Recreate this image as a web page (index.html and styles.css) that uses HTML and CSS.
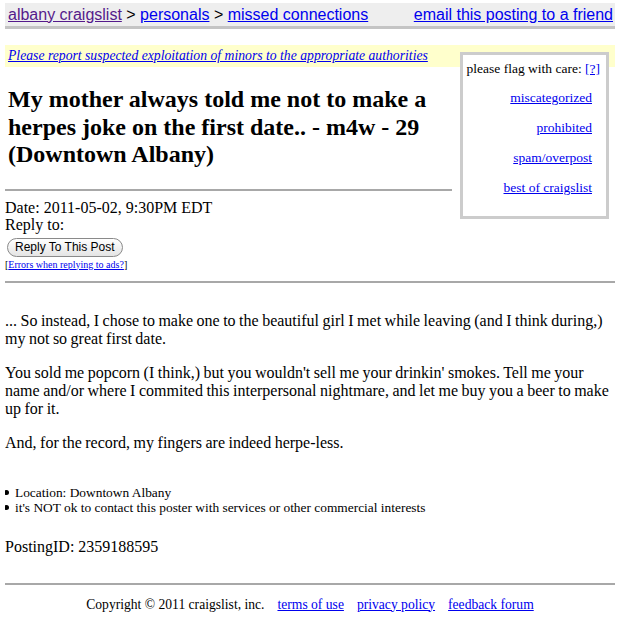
FILE: index.html
```html
<!DOCTYPE html>
<html>
<head>
<meta charset="utf-8">
<link rel="stylesheet" href="styles.css">
</head>
<body>
<div class="bchead">
  <div class="crumbs">
    <a class="visited" href="#">albany craigslist</a> <b>&gt;</b> <a href="#">personals</a> <b>&gt;</b> <a href="#">missed connections</a>
  </div>
  <a href="#">email this posting to a friend</a>
</div>

<div class="warning"><a href="#">Please report suspected exploitation of minors to the appropriate authorities</a></div>

<div class="top">
  <div class="main">
    <h2 class="title">My mother always told me not to make a herpes joke on the first date.. - m4w - 29 (Downtown Albany)</h2>
    <hr class="rule">
    <div class="meta">Date: 2011-05-02, 9:30PM EDT<br>Reply to:</div>
    <button class="reply">Reply To This Post</button>
    <div class="errors">[<a href="#">Errors when replying to ads?</a>]</div>
  </div>
  <div class="flags">
    <div class="flaghead">please flag with care: <a href="#">[?]</a></div>
    <a class="flag" href="#">miscategorized</a>
    <a class="flag" href="#">prohibited</a>
    <a class="flag" href="#">spam/overpost</a>
    <a class="flag" href="#">best of craigslist</a>
  </div>
</div>

<hr class="rule full">

<div class="userbody">
  <p>... So instead, I chose to make one to the beautiful girl I met while leaving (and I think during,) my not so great first date.</p>
  <p>You sold me popcorn (I think,) but you wouldn't sell me your drinkin' smokes. Tell me your name and/or where I commited this interpersonal nightmare, and let me buy you a beer to make up for it.</p>
  <p>And, for the record, my fingers are indeed herpe-less.</p>
</div>

<ul class="info">
  <li>Location: Downtown Albany</li>
  <li>it's NOT ok to contact this poster with services or other commercial interests</li>
</ul>

<div class="postingid">PostingID: 2359188595</div>

<hr class="rule full footrule">

<div class="footer">
  <span>Copyright &copy; 2011 craigslist, inc.</span>
  <a href="#">terms of use</a>
  <a href="#">privacy policy</a>
  <a href="#">feedback forum</a>
</div>
</body>
</html>
```
FILE: styles.css
```css
html, body { background: #fff; }
body {
  margin: 3px 5px 0 5px;
  font-family: "Liberation Serif", "Times New Roman", serif;
  font-size: 16px;
  color: #000;
}
a { color: #0000ee; }
a.visited { color: #551a8b; }

.bchead {
  display: flex;
  justify-content: space-between;
  align-items: center;
  background: #eeeeee;
  border-bottom: 3px solid #c4c4c4;
  height: 23px;
  padding: 0 2px 0 3px;
  font-family: "Liberation Sans", Arial, sans-serif;
  font-size: 16px;
}
.bchead b { font-weight: normal; color: #000; }

.warning {
  margin-top: 16px;
  background: #ffffcc;
  height: 22px;
  padding-left: 3px;
  font-size: 13.7px;
  font-style: italic;
  line-height: 22px;
}

.top {
  display: grid;
  grid-template-columns: 1fr 149px;
  column-gap: 8px;
  align-items: start;
  margin-right: 6px;
}
.main { padding-top: 19px; }
.title {
  margin: 0 0 0 3px;
  font-size: 24px;
  font-weight: bold;
  line-height: 27.5px;
}
.rule {
  border: 0;
  height: 2px;
  background: #a8a8a8;
  margin: 20px 0 0 0;
}
.meta {
  margin-top: 8px;
  line-height: 17px;
}
.reply {
  display: block;
  margin: 5px 0 0 2px;
  height: 19px;
  padding: 0 7px;
  border: 1px solid #8a8a8a;
  border-radius: 10px;
  background: linear-gradient(#ffffff, #e4e4e4);
  font-family: "Liberation Sans", Arial, sans-serif;
  font-size: 12px;
  line-height: 17px;
  color: #000;
}
.errors {
  margin: 2px 0 0 0;
  font-size: 10px;
  line-height: 12px;
}

.flags {
  margin-top: -15px;
  background: #fff;
  border: 3px solid #cccccc;
  box-sizing: border-box;
  height: 167px;
  padding: 6px 6px 0 7px;
  display: flex;
  flex-direction: column;
  align-items: flex-end;
  font-size: 13.5px;
  line-height: 15px;
  row-gap: 15px;
  white-space: nowrap;
}
.flaghead { margin-bottom: -1px; }
.flag { margin-right: 8px; }

.full { margin-top: 10px; }

.userbody {
  margin-top: 29px;
  line-height: 18px;
  word-spacing: -0.5px;
}
.userbody p { margin: 0 0 16px 0; }

.info {
  list-style: none;
  margin: 33px 0 0 0;
  padding-left: 10px;
  font-size: 13.4px;
  line-height: 15px;
}
.info li { position: relative; }
.info li::before {
  content: "";
  display: block;
  position: absolute;
  left: -11px;
  top: 5px;
  width: 5px;
  height: 5px;
  border-radius: 50%;
  background: #000;
}

.postingid { margin-top: 23px; line-height: 18px; }

.footrule { margin-top: 27px; }

.footer {
  display: flex;
  justify-content: center;
  column-gap: 13px;
  margin-top: 12px;
  font-size: 13.6px;
  line-height: 15px;
}
```
